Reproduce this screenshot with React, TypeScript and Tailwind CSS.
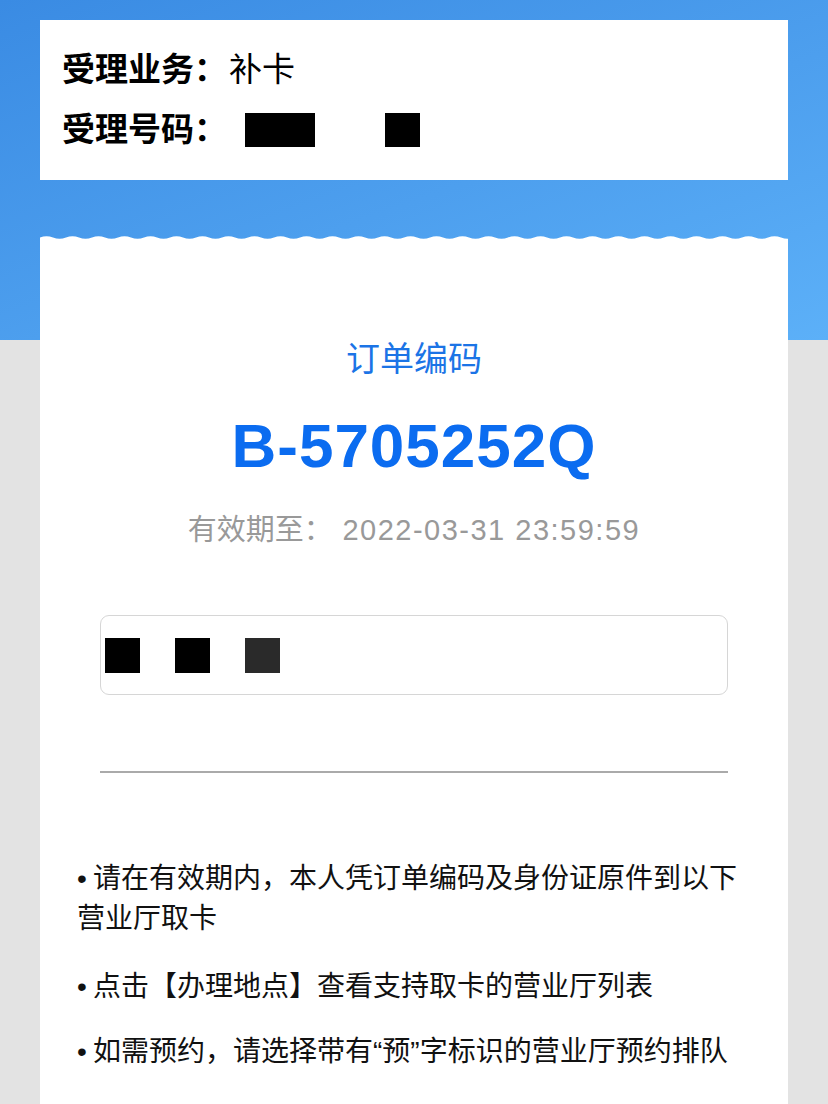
const CJK = "font-['Liberation_Sans','Noto_Sans_CJK_SC',sans-serif]";

function Wave() {
  // scalloped top edge of the ticket card
  const period = 26;
  const n = Math.ceil(748 / (period / 2));
  let d = "M0 6 L0 3.5 Q 6.5 1 13 3.5";
  for (let i = 2; i <= n; i++) d += ` T ${i * (period / 2)} 3.5`;
  d += ` L748 6 Z`;
  return (
    <svg width="748" height="6" viewBox="0 0 748 6" className="block -mb-px" preserveAspectRatio="none">
      <path d={d} fill="#ffffff" />
    </svg>
  );
}

function Bullet({ children, className = "" }: { children: React.ReactNode; className?: string }) {
  return (
    <p className={`text-[28px] leading-[40px] text-[#111] before:content-['•'] before:inline-block before:w-[16px] ${className}`}>
      {children}
    </p>
  );
}

export default function App() {
  return (
    <div className={`relative min-h-screen bg-[#e3e3e3] ${CJK}`}>
      <div className="absolute inset-x-0 top-0 h-[340px] bg-[linear-gradient(160deg,#3a8be3_0%,#4d9fee_55%,#5cb0f8_100%)]" />

      <div className="relative px-[40px] pt-[20px]">
        <div className="bg-white h-[160px] px-[22px] py-[20px] text-[33px] leading-[60px] text-black">
          <div className="flex items-center">
            <span className="font-bold">受理业务：</span>
            <span className="ml-[2px]">补卡</span>
          </div>
          <div className="flex items-center">
            <span className="font-bold">受理号码：</span>
            <span className="ml-[18px] w-[70px] h-[34px] bg-black" />
            <span className="ml-[70px] w-[35px] h-[34px] bg-black" />
          </div>
        </div>

        <div className="mt-[54px]">
          <Wave />
          <div className="bg-white pt-[100px] pb-[120px]">
            <div className="text-center text-[34px] leading-[40px] text-[#1b74e6]">订单编码</div>
            <div className="mt-[32px] text-center text-[62px] leading-[70px] font-bold tracking-[1px] text-[#0b6cf0]">
              B-5705252Q
            </div>
            <div className="mt-[29px] text-center text-[29px] leading-[40px] text-[#999]">
              有效期至：<span className="tracking-[1.5px]"> 2022-03-31 23:59:59</span>
            </div>

            <div className="mx-[60px] mt-[65px] h-[80px] rounded-[9px] border border-[#d6d6d6] flex items-center gap-[35px] pl-[4px]">
              <span className="w-[35px] h-[35px] bg-black" />
              <span className="w-[35px] h-[35px] bg-black" />
              <span className="w-[35px] h-[35px] bg-[#2a2a2a]" />
            </div>

            <div className="mx-[60px] mt-[76px] h-[2px] bg-[#aaaaaa]" />

            <div className="pl-[37px] w-[700px] mt-[86px]">
              <Bullet>请在有效期内，本人凭订单编码及身份证原件到以下营业厅取卡</Bullet>
              <Bullet className="mt-[28px]">点击【办理地点】查看支持取卡的营业厅列表</Bullet>
              <Bullet className="mt-[25px]">如需预约，请选择带有“预”字标识的营业厅预约排队</Bullet>
            </div>
          </div>
        </div>
      </div>
    </div>
  );
}
